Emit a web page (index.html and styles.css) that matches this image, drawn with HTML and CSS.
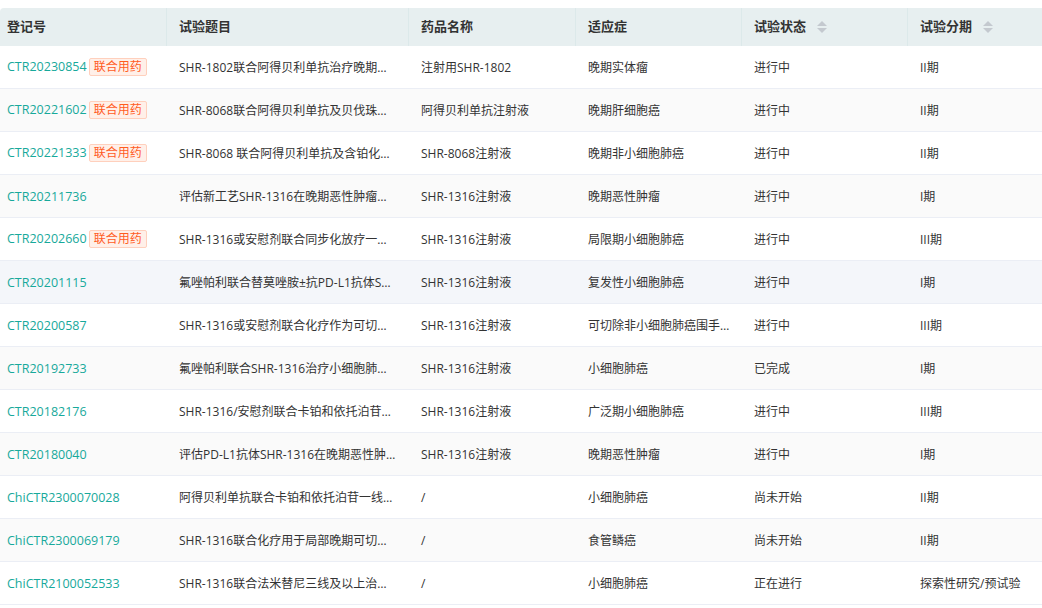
FILE: index.html
```html
<!DOCTYPE html>
<html lang="zh">
<head>
<meta charset="utf-8">
<link rel="stylesheet" href="styles.css">
</head>
<body>
<table class="trials">
  <colgroup>
    <col class="c1"><col class="c2"><col class="c3"><col class="c4"><col class="c5"><col class="c6">
  </colgroup>
  <thead>
    <tr>
      <th class="first">登记号</th>
      <th>试验题目</th>
      <th>药品名称</th>
      <th>适应症</th>
      <th><span class="th-sort">试验状态<span class="sort"><i class="up"></i><i class="down"></i></span></span></th>
      <th class="last"><span class="th-sort">试验分期<span class="sort"><i class="up"></i><i class="down"></i></span></span></th>
    </tr>
  </thead>
  <tbody>
    <tr><td class="first"><a class="link">CTR20230854</a><span class="tag">联合用药</span></td><td><div class="ell">SHR-1802联合阿得贝利单抗治疗晚期实体瘤的I/II期临床研究</div></td><td>注射用SHR-1802</td><td>晚期实体瘤</td><td>进行中</td><td>II期</td></tr>
    <tr class="stripe"><td class="first"><a class="link">CTR20221602</a><span class="tag">联合用药</span></td><td><div class="ell">SHR-8068联合阿得贝利单抗及贝伐珠单抗治疗晚期肝细胞癌</div></td><td>阿得贝利单抗注射液</td><td>晚期肝细胞癌</td><td>进行中</td><td>II期</td></tr>
    <tr><td class="first"><a class="link">CTR20221333</a><span class="tag">联合用药</span></td><td><div class="ell">SHR-8068 联合阿得贝利单抗及含铂化疗治疗晚期非小细胞肺癌</div></td><td>SHR-8068注射液</td><td>晚期非小细胞肺癌</td><td>进行中</td><td>II期</td></tr>
    <tr class="stripe"><td class="first"><a class="link">CTR20211736</a></td><td><div class="ell">评估新工艺SHR-1316在晚期恶性肿瘤患者中的药代动力学</div></td><td>SHR-1316注射液</td><td>晚期恶性肿瘤</td><td>进行中</td><td>I期</td></tr>
    <tr><td class="first"><a class="link">CTR20202660</a><span class="tag">联合用药</span></td><td><div class="ell">SHR-1316或安慰剂联合同步化放疗一线治疗局限期小细胞肺癌</div></td><td>SHR-1316注射液</td><td>局限期小细胞肺癌</td><td>进行中</td><td>III期</td></tr>
    <tr class="hover"><td class="first"><a class="link">CTR20201115</a></td><td><div class="ell">氟唑帕利联合替莫唑胺±抗PD-L1抗体SHR-1316治疗复发性小细胞肺癌</div></td><td>SHR-1316注射液</td><td>复发性小细胞肺癌</td><td>进行中</td><td>I期</td></tr>
    <tr><td class="first"><a class="link">CTR20200587</a></td><td><div class="ell">SHR-1316或安慰剂联合化疗作为可切除非小细胞肺癌围手术期治疗</div></td><td>SHR-1316注射液</td><td><div class="ell">可切除非小细胞肺癌围手术期治疗</div></td><td>进行中</td><td>III期</td></tr>
    <tr class="stripe"><td class="first"><a class="link">CTR20192733</a></td><td><div class="ell">氟唑帕利联合SHR-1316治疗小细胞肺癌的I期临床研究</div></td><td>SHR-1316注射液</td><td>小细胞肺癌</td><td>已完成</td><td>I期</td></tr>
    <tr><td class="first"><a class="link">CTR20182176</a></td><td><div class="ell">SHR-1316/安慰剂联合卡铂和依托泊苷治疗广泛期小细胞肺癌</div></td><td>SHR-1316注射液</td><td>广泛期小细胞肺癌</td><td>进行中</td><td>III期</td></tr>
    <tr class="stripe"><td class="first"><a class="link">CTR20180040</a></td><td><div class="ell">评估PD-L1抗体SHR-1316在晚期恶性肿瘤患者中的安全性</div></td><td>SHR-1316注射液</td><td>晚期恶性肿瘤</td><td>进行中</td><td>I期</td></tr>
    <tr><td class="first"><a class="link">ChiCTR2300070028</a></td><td><div class="ell">阿得贝利单抗联合卡铂和依托泊苷一线治疗广泛期小细胞肺癌</div></td><td>/</td><td>小细胞肺癌</td><td>尚未开始</td><td>II期</td></tr>
    <tr class="stripe"><td class="first"><a class="link">ChiCTR2300069179</a></td><td><div class="ell">SHR-1316联合化疗用于局部晚期可切除食管鳞癌的新辅助治疗</div></td><td>/</td><td>食管鳞癌</td><td>尚未开始</td><td>II期</td></tr>
    <tr><td class="first"><a class="link">ChiCTR2100052533</a></td><td><div class="ell">SHR-1316联合法米替尼三线及以上治疗小细胞肺癌</div></td><td>/</td><td>小细胞肺癌</td><td>正在进行</td><td>探索性研究/预试验</td></tr>
  </tbody>
</table>
</body>
</html>
```

FILE: styles.css
```css
html, body {
  margin: 0;
  padding: 0;
  background: #ffffff;
}
body {
  padding-top: 8px;
  font-family: "Open Sans", "Noto Sans CJK SC", sans-serif;
  color: #333333;
  overflow: hidden;
}
.trials {
  width: 1042px;
  table-layout: fixed;
  border-collapse: separate;
  border-spacing: 0;
}
.c1 { width: 167px; }
.c2 { width: 242px; }
.c3 { width: 167px; }
.c4 { width: 166px; }
.c5 { width: 166px; }
.c6 { width: 134px; }

.trials th {
  height: 36px;
  padding: 0 12px 2px;
  background: #e7eff0;
  border-right: 1px solid #dce9ea;
  text-align: left;
  font-size: 13px;
  font-weight: 700;
  color: #333333;
  white-space: nowrap;
  line-height: 18px;
}
.trials th.first {
  padding-left: 7px;
  border-top-left-radius: 4px;
}
.trials th.last { border-right: none; }

.th-sort {
  display: inline-flex;
  align-items: center;
}
.sort {
  display: inline-flex;
  flex-direction: column;
  gap: 2px;
  margin-left: 11px;
  margin-top: 2px;
}
.sort i {
  display: block;
  width: 0;
  height: 0;
  border-left: 5px solid transparent;
  border-right: 5px solid transparent;
}
.sort .up { border-bottom: 5px solid #c4c9cf; }
.sort .down { border-top: 5px solid #c4c9cf; }

.trials td {
  height: 42px;
  padding: 0 12px;
  border-bottom: 1px solid #ebeef5;
  font-size: 12px;
  line-height: 17px;
  color: #333333;
  white-space: nowrap;
  overflow: hidden;
}
.trials td.first { padding-left: 7px; padding-right: 0; }
.trials tr.stripe td { background: #fafafa; }
.trials tr.hover td { background: #f4f6fa; }

.ell {
  overflow: hidden;
  text-overflow: ellipsis;
  white-space: nowrap;
}
.link {
  color: #17a99b;
  font-size: 12.5px;
  text-decoration: none;
}
.tag {
  display: inline-block;
  margin-left: 2px;
  padding: 0 4px;
  height: 16px;
  line-height: 16px;
  font-size: 12px;
  color: #ff5c1f;
  background: #fff0e9;
  border: 1px solid #ffd0bd;
  border-radius: 2px;
  vertical-align: middle;
}
```
